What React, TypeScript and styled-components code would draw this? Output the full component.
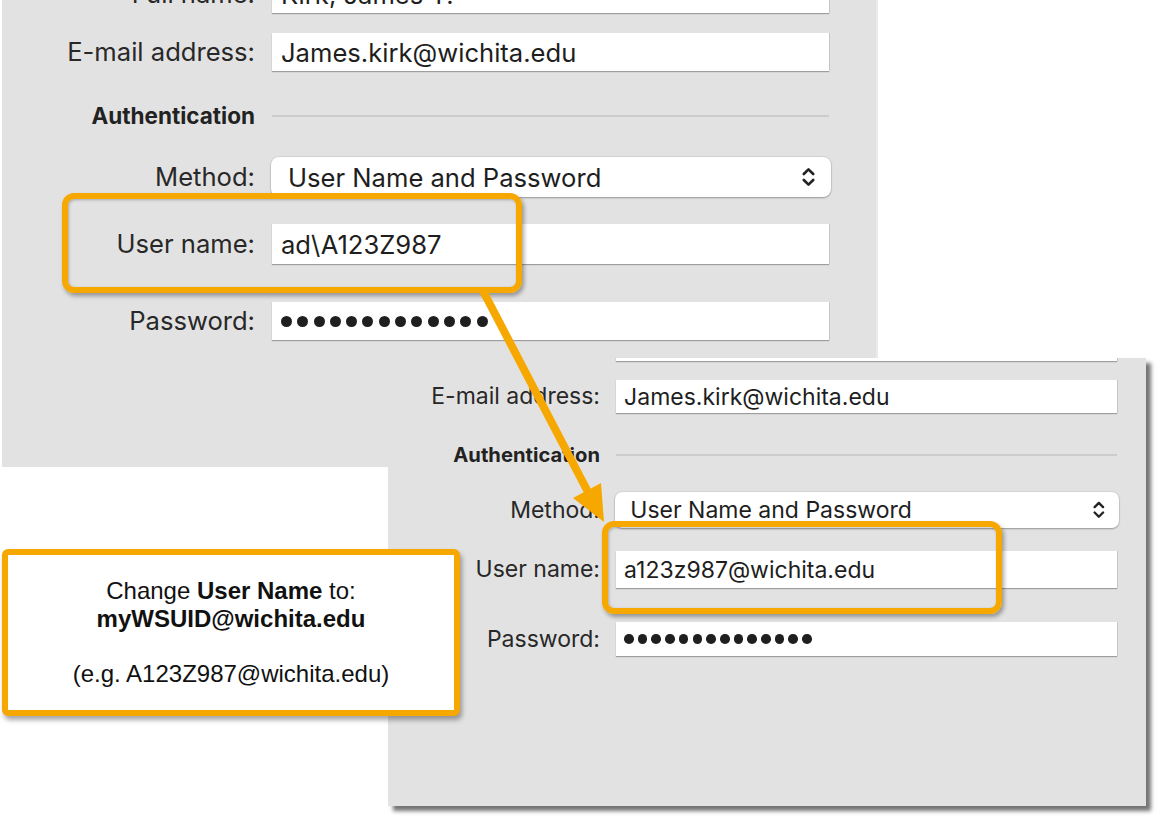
import React from "react";
import styled, { createGlobalStyle } from "styled-components";

const Global = createGlobalStyle`
  html, body { margin: 0; padding: 0; background: #ffffff; }
  body { width: 1160px; height: 822px; overflow: hidden; font-family: Inter, "Noto Sans", sans-serif; }
`;

const ORANGE = "#f6a800";

const Canvas = styled.div`
  position: relative;
  width: 1160px;
  height: 822px;
  background: #ffffff;
  overflow: hidden;
`;

const Window = styled.div<{ $x: number; $y: number; $w: number; $h: number; $shadow?: boolean }>`
  position: absolute;
  left: ${(p) => p.$x}px;
  top: ${(p) => p.$y}px;
  width: ${(p) => p.$w}px;
  height: ${(p) => p.$h}px;
  background: #e3e2e3;
  box-sizing: border-box;
  overflow: hidden;
  border-right: 2px solid ${(p) => (p.$shadow ? "#e3e2e3" : "#ebeaeb")};
  box-shadow: ${(p) => (p.$shadow ? "5px 5px 4px rgba(0,0,0,0.55)" : "none")};
`;

const Form = styled.div<{ $label: number; $field: number; $gap: number; $fs: number; $s: number }>`
  --label-w: ${(p) => p.$label}px;
  --field-w: ${(p) => p.$field}px;
  --gap: ${(p) => p.$gap}px;
  --s: ${(p) => p.$s};
  display: flex;
  flex-direction: column;
  font-size: ${(p) => p.$fs}px;
  font-family: Inter, "Noto Sans", sans-serif;
`;

const Row = styled.div<{ $mt: number; $h: number }>`
  display: grid;
  grid-template-columns: var(--label-w) var(--field-w);
  column-gap: var(--gap);
  align-items: center;
  margin-top: ${(p) => p.$mt}px;
  height: ${(p) => p.$h}px;
  flex-shrink: 0;
`;

const Label = styled.span`
  text-align: right;
  color: #282828;
  white-space: nowrap;
  line-height: 1;
`;

const SectionTitle = styled.span<{ $fs: number }>`
  text-align: right;
  color: #222;
  font-weight: 700;
  font-size: ${(p) => p.$fs}px;
  white-space: nowrap;
  line-height: 1;
`;

const Rule = styled.div`
  height: 2px;
  background: #cdcccd;
`;

const Field = styled.div`
  height: 100%;
  box-sizing: border-box;
  background: #ffffff;
  box-shadow: 0 1px 1px rgba(0, 0, 0, 0.3), 1px 0 0 rgba(0, 0, 0, 0.08);
  display: flex;
  align-items: center;
  padding-left: calc(9px * var(--s));
  color: #1e1e1e;
  white-space: nowrap;
  overflow: hidden;
`;

const Popup = styled.div`
  height: 100%;
  box-sizing: border-box;
  margin: 0 -2px 0 -1px;
  background: #ffffff;
  border-radius: calc(8px * var(--s));
  box-shadow: 0 1px 2px rgba(0, 0, 0, 0.3), 0 0 0 1px rgba(0, 0, 0, 0.05);
  display: flex;
  align-items: center;
  justify-content: space-between;
  padding: 0 calc(16px * var(--s)) 0 calc(17px * var(--s));
  color: #1e1e1e;
  white-space: nowrap;
`;

const Dots = styled.div<{ $gap: number }>`
  display: flex;
  align-items: center;
  gap: ${(p) => p.$gap}px;
`;

const Dot = styled.span<{ $d: number }>`
  width: ${(p) => p.$d}px;
  height: ${(p) => p.$d}px;
  border-radius: 50%;
  background: #1f1f1f;
`;

const Chevrons = styled.svg`
  width: calc(13px * var(--s));
  height: calc(24px * var(--s));
`;

const Highlight = styled.div<{ $x: number; $y: number; $w: number; $h: number }>`
  position: absolute;
  left: ${(p) => p.$x}px;
  top: ${(p) => p.$y}px;
  width: ${(p) => p.$w}px;
  height: ${(p) => p.$h}px;
  box-sizing: border-box;
  border: 6px solid ${ORANGE};
  border-radius: 12px;
  box-shadow: 2px 3px 4px rgba(0, 0, 0, 0.35), inset 1px 1px 3px rgba(0, 0, 0, 0.25);
`;

const Callout = styled.div`
  position: absolute;
  left: 2px;
  top: 549px;
  width: 458px;
  height: 167px;
  box-sizing: border-box;
  border: 6px solid ${ORANGE};
  border-radius: 6px;
  background: #ffffff;
  box-shadow: 2px 4px 5px rgba(0, 0, 0, 0.35);
  font-family: "Liberation Sans", Arial, sans-serif;
  font-size: 24px;
  line-height: 27.7px;
  color: #111;
  display: flex;
  flex-direction: column;
  align-items: center;
  justify-content: center;
  text-align: center;
`;

const CalloutLine = styled.div``;

const Overlay = styled.svg`
  position: absolute;
  left: 0;
  top: 0;
  width: 1160px;
  height: 822px;
  pointer-events: none;
`;

type RowSpec = [number, number];
type Layout = {
  s: number;
  fs: number;
  authFs: number;
  label: number;
  gap: number;
  field: number;
  full: RowSpec;
  email: RowSpec;
  auth: RowSpec;
  method: RowSpec;
  user: RowSpec;
  pass: RowSpec;
  userName: string;
  dots: number;
  dotD: number;
  dotGap: number;
};

const AccountForm: React.FC<{ l: Layout }> = ({ l }) => (
  <Form $label={l.label} $field={l.field} $gap={l.gap} $fs={l.fs} $s={l.s}>
    <Row $mt={l.full[0]} $h={l.full[1]}>
      <Label>Full name:</Label>
      <Field>Kirk, James T.</Field>
    </Row>
    <Row $mt={l.email[0]} $h={l.email[1]}>
      <Label>E-mail address:</Label>
      <Field>James.kirk@wichita.edu</Field>
    </Row>
    <Row $mt={l.auth[0]} $h={l.auth[1]}>
      <SectionTitle $fs={l.authFs}>Authentication</SectionTitle>
      <Rule />
    </Row>
    <Row $mt={l.method[0]} $h={l.method[1]}>
      <Label>Method:</Label>
      <Popup>
        <span>User Name and Password</span>
        <Chevrons viewBox="0 0 13 24" fill="none" stroke="#222" strokeWidth="2.6" strokeLinecap="round" strokeLinejoin="round">
          <path d="M1.8 9 L6.5 4.3 L11.2 9" />
          <path d="M1.8 15 L6.5 19.7 L11.2 15" />
        </Chevrons>
      </Popup>
    </Row>
    <Row $mt={l.user[0]} $h={l.user[1]}>
      <Label>User name:</Label>
      <Field>{l.userName}</Field>
    </Row>
    <Row $mt={l.pass[0]} $h={l.pass[1]}>
      <Label>Password:</Label>
      <Field>
        <Dots $gap={l.dotGap}>
          {Array.from({ length: l.dots }).map((_, i) => (
            <Dot key={i} $d={l.dotD} />
          ))}
        </Dots>
      </Field>
    </Row>
  </Form>
);

const topLayout: Layout = {
  s: 1,
  fs: 25.6,
  authFs: 22.5,
  label: 253,
  gap: 17,
  field: 557,
  full: [-25, 38],
  email: [20, 38],
  auth: [33, 24],
  method: [29, 40],
  user: [27, 40],
  pass: [38, 38],
  userName: "ad\\A123Z987",
  dots: 13,
  dotD: 11,
  dotGap: 5.3,
};

const bottomLayout: Layout = {
  s: 0.9,
  fs: 23,
  authFs: 20.2,
  label: 212,
  gap: 16,
  field: 501,
  full: [-31, 34],
  email: [19, 33],
  auth: [31, 22],
  method: [26, 36],
  user: [23, 37],
  pass: [34, 34],
  userName: "a123z987@wichita.edu",
  dots: 14,
  dotD: 9.6,
  dotGap: 4.1,
};

export default function App() {
  return (
    <Canvas>
      <Global />
      <Window $x={2} $y={0} $w={876} $h={467}>
        <AccountForm l={topLayout} />
      </Window>
      <Window $x={388} $y={358} $w={758} $h={448} $shadow>
        <AccountForm l={bottomLayout} />
      </Window>
      <Callout>
        <CalloutLine>
          Change <b>User Name</b> to:
        </CalloutLine>
        <CalloutLine>
          <b>myWSUID@wichita.edu</b>
        </CalloutLine>
        <CalloutLine>&nbsp;</CalloutLine>
        <CalloutLine>(e.g. A123Z987@wichita.edu)</CalloutLine>
      </Callout>
      <Highlight $x={62} $y={193} $w={460} $h={100} />
      <Highlight $x={602} $y={521} $w={400} $h={93} />
      <Overlay viewBox="0 0 1160 822">
        <line x1="482" y1="289" x2="588" y2="492" stroke={ORANGE} strokeWidth="8" />
        <polygon points="604,522 573,498 601,483" fill={ORANGE} />
      </Overlay>
    </Canvas>
  );
}
